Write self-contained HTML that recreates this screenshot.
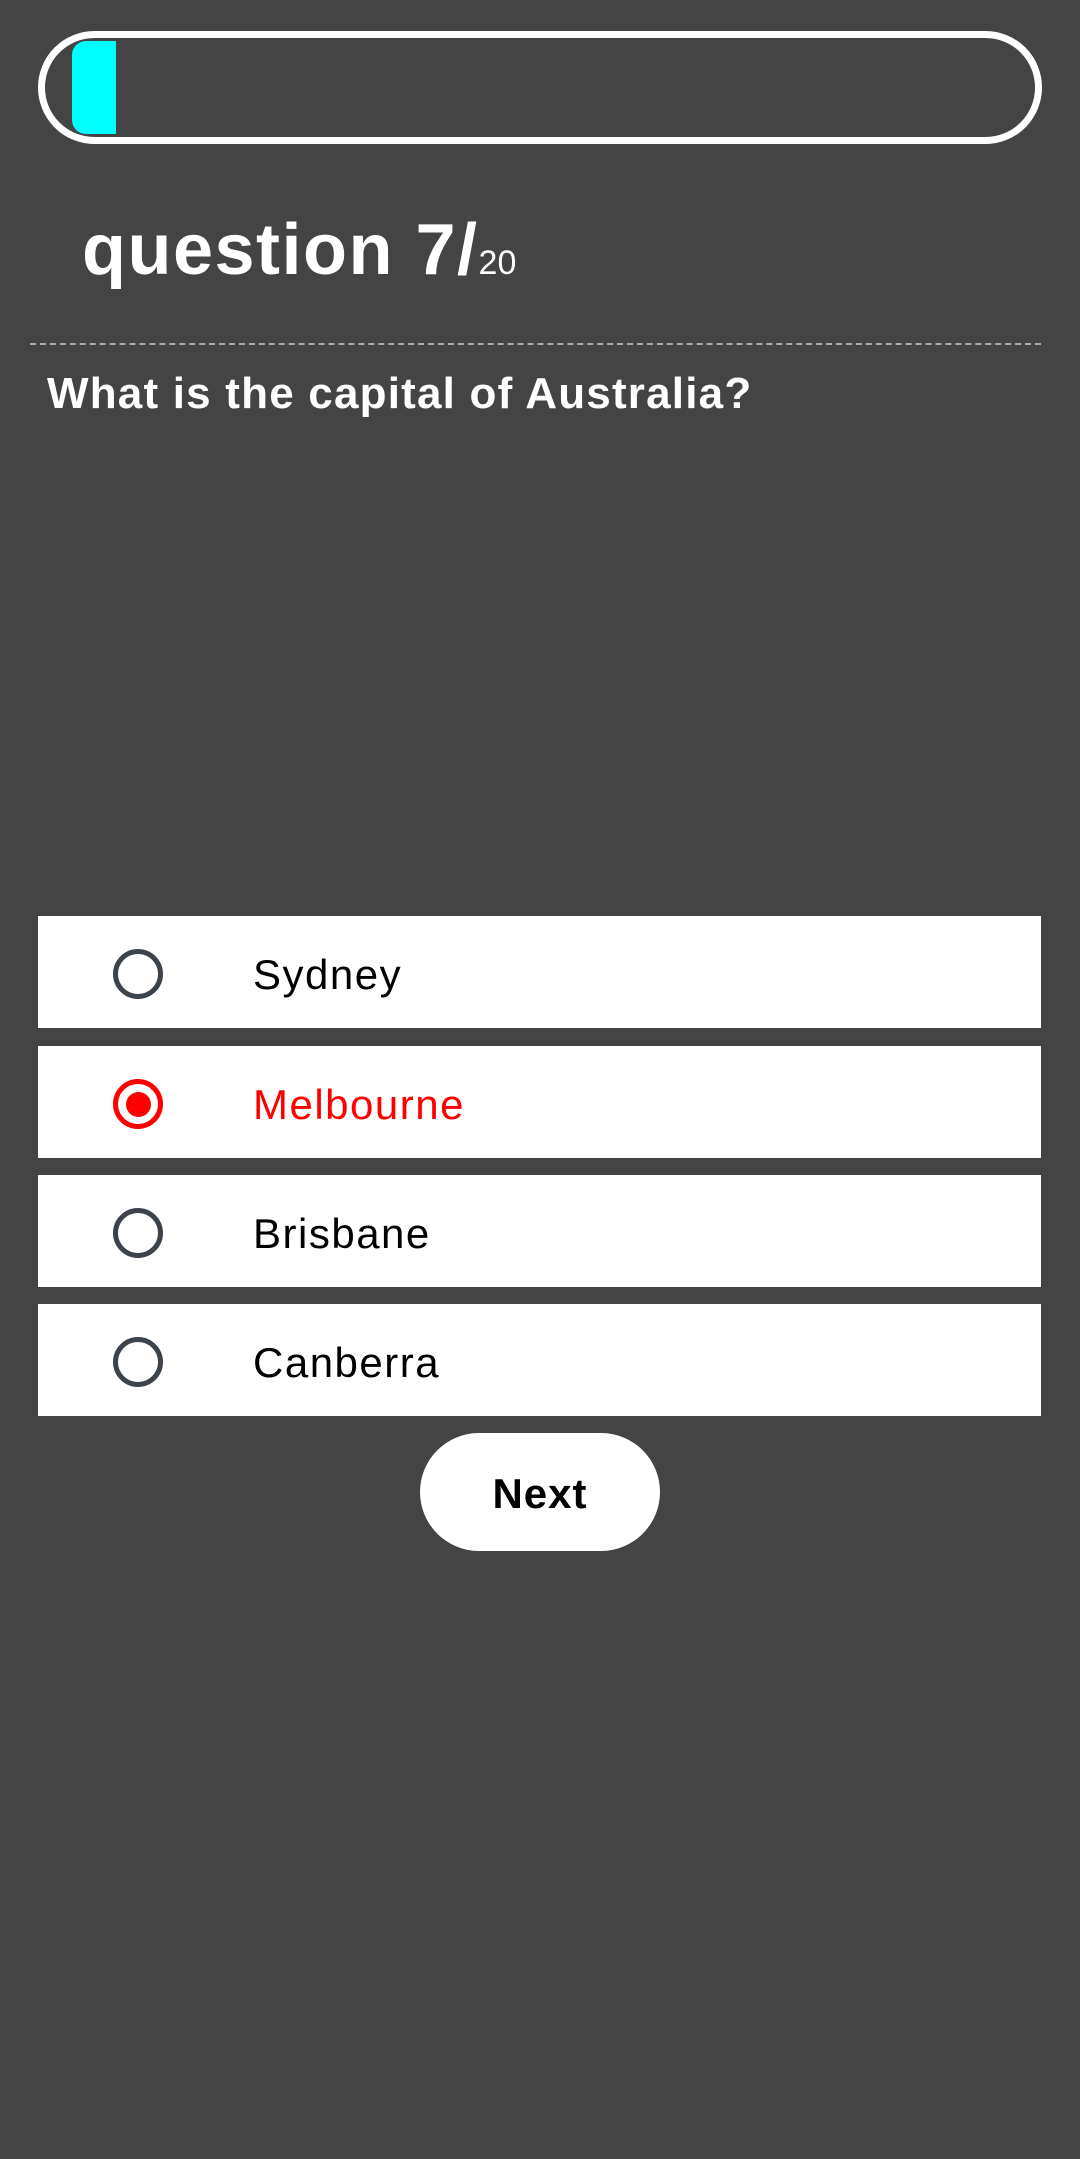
<!DOCTYPE html>
<html><head><meta charset="utf-8"><style>
html,body{margin:0;padding:0;}
body{width:1080px;height:2159px;background:#444444;position:relative;overflow:hidden;font-family:"Liberation Sans",sans-serif;}
.bar{position:absolute;left:38px;top:31px;width:990px;height:99px;border:7px solid #fff;border-radius:60px;}
.fill{position:absolute;left:72px;top:41px;width:44px;height:93px;background:#00ffff;border-radius:14px 0 0 14px;}
.q{position:absolute;left:82px;top:205px;color:#fff;font-weight:bold;font-size:72px;line-height:90px;letter-spacing:1.5px;}
.q small{font-size:34px;font-weight:normal;letter-spacing:0;}
.dash{position:absolute;left:30px;top:343px;width:1011px;border-top:2px dashed #aaa;}
.ques{position:absolute;left:47px;top:366px;color:#fff;font-weight:bold;font-size:44px;line-height:56px;letter-spacing:1.2px;}
.opt{position:absolute;left:38px;width:1003px;height:112px;background:#fff;}
.rad{position:absolute;left:75px;width:40px;height:40px;border:5px solid #3d434a;border-radius:50%;top:33px;}
.rad.sel{border-color:#ff0000;}
.rad.sel::after{content:"";position:absolute;left:7.5px;top:7.5px;width:25px;height:25px;border-radius:50%;background:#ff0000;}
.lab{position:absolute;left:215px;top:3px;line-height:112px;font-size:42px;color:#000;letter-spacing:1.5px;}
.next{position:absolute;left:420px;top:1433px;width:240px;height:118px;background:#fff;border-radius:60px;text-align:center;line-height:122px;font-weight:bold;font-size:42px;color:#000;letter-spacing:1px;}
</style></head><body>
<div class="bar"></div>
<div class="fill"></div>
<div class="q">question 7/<small>20</small></div>
<div class="dash"></div>
<div class="ques">What is the capital of Australia?</div>
<div class="opt" style="top:916px"><div class="rad"></div><div class="lab">Sydney</div></div>
<div class="opt" style="top:1046px"><div class="rad sel"></div><div class="lab" style="color:#ff0000">Melbourne</div></div>
<div class="opt" style="top:1175px"><div class="rad"></div><div class="lab">Brisbane</div></div>
<div class="opt" style="top:1304px"><div class="rad"></div><div class="lab">Canberra</div></div>
<div class="next">Next</div>
</body></html>
